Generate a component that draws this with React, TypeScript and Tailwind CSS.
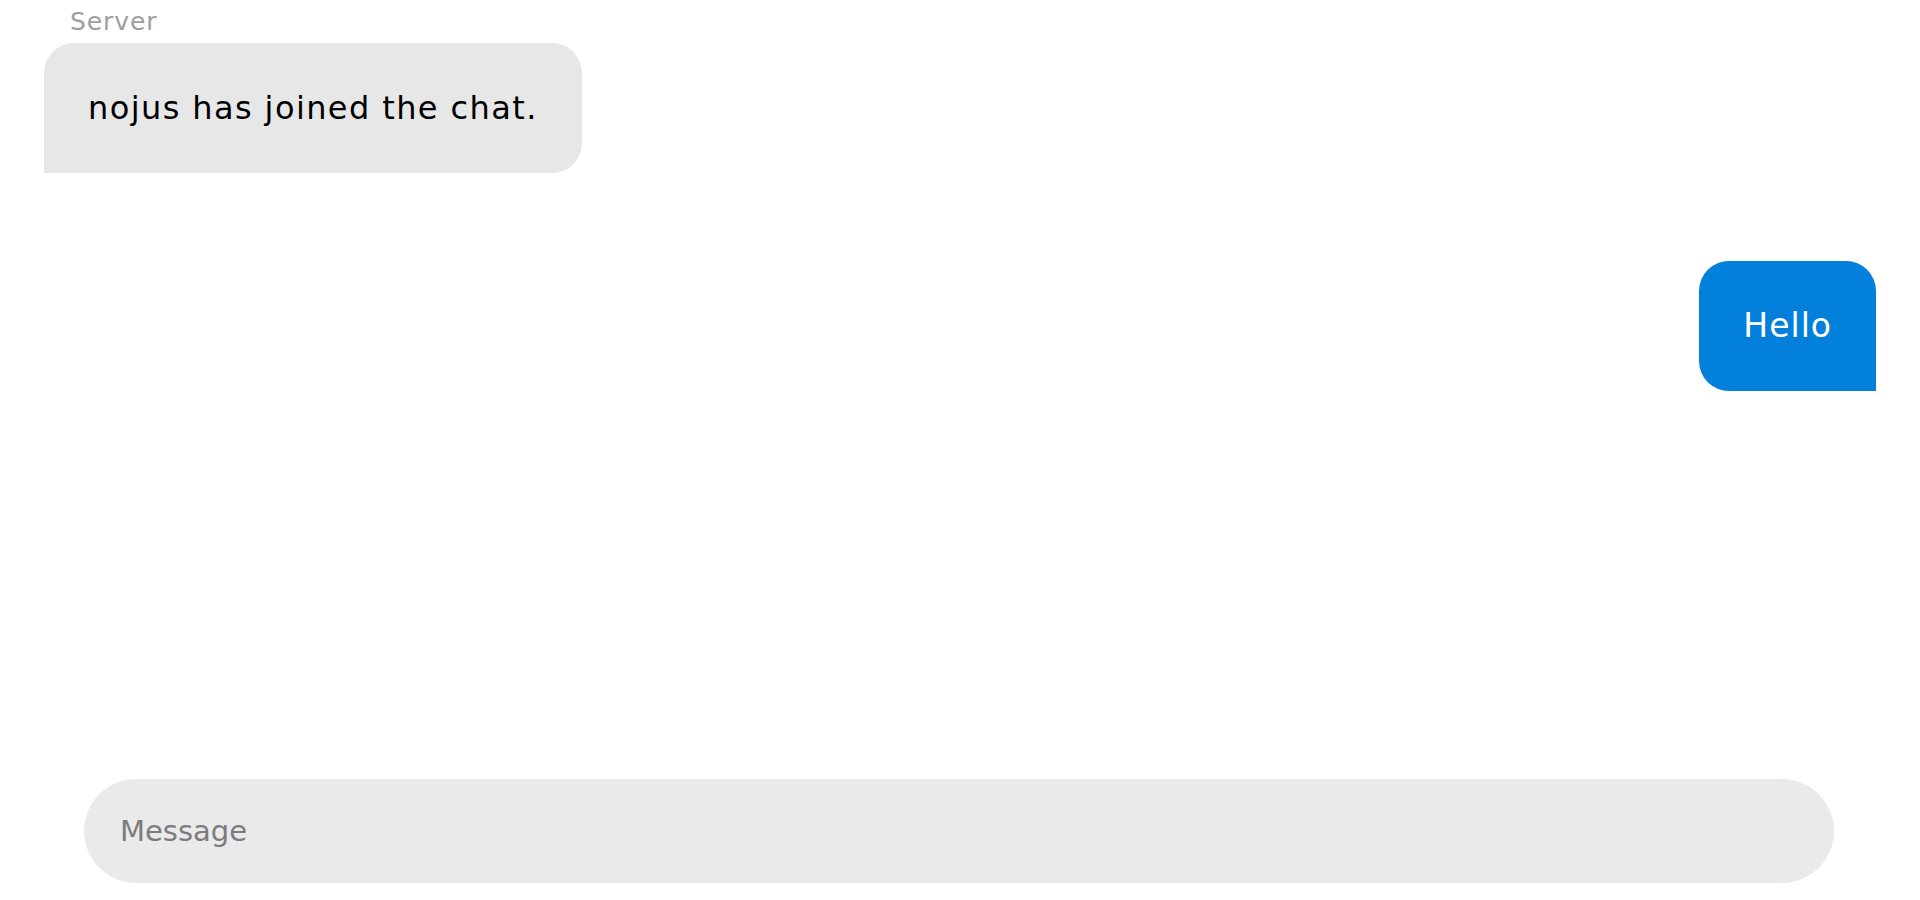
import React, { useState } from 'react';

type Msg = { id: number; author: string; text: string; mine: boolean };

const messages: Msg[] = [
  { id: 1, author: 'Server', text: 'nojus has joined the chat.', mine: false },
  { id: 2, author: 'nojus', text: 'Hello', mine: true },
];

const font = { fontFamily: '"DejaVu Sans", "Open Sans", sans-serif' };

const App: React.FC = () => {
  const [draft, setDraft] = useState('');

  return (
    <div className="flex h-screen flex-col bg-white" style={font}>
      <div className="flex flex-1 flex-col gap-[88px] px-[44px]">
        {messages.map((m) =>
          m.mine ? (
            <div key={m.id} className="flex justify-end">
              <div className="flex h-[130px] items-center rounded-t-[30px] rounded-bl-[30px] bg-[#0280dc] px-[44px] text-[33px] tracking-[1px] text-white">
                {m.text}
              </div>
            </div>
          ) : (
            <div key={m.id} className="flex flex-col items-start">
              <div className="flex h-[43px] items-center pl-[26px] text-[25px] tracking-[0.9px] text-[#9e9e9e]">{m.author}</div>
              <div className="flex h-[130px] items-center rounded-t-[30px] rounded-br-[30px] bg-[#e7e7e7] px-[44px] text-[32px] tracking-[1.4px] text-black">
                {m.text}
              </div>
            </div>
          )
        )}
      </div>
      <div className="px-[86px] pb-[17px] pl-[84px]">
        <input
          autoFocus
          value={draft}
          onChange={(e) => setDraft(e.target.value)}
          placeholder="Message"
          className="h-[104px] w-full rounded-[52px] bg-[#eaeaea] pl-[36px] pr-[36px] text-[29px] text-black outline-none placeholder:text-[#7c7c7c]"
        />
      </div>
    </div>
  );
};

export default App;
